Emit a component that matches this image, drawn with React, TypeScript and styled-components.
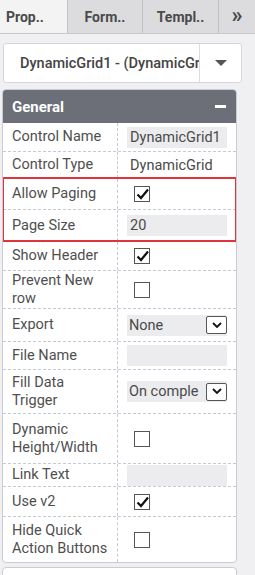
import React from 'react';
import styled, { createGlobalStyle } from 'styled-components';

const Global = createGlobalStyle`
  html, body {
    margin: 0;
    padding: 0;
    background: #f0f0f2;
  }
  body {
    font-family: Roboto, "Liberation Sans", sans-serif;
    color: #3c3c3c;
  }
`;

const Page = styled.div`
  width: 255px;
  height: 575px;
  overflow: hidden;
  background: #f0f0f2;
`;

const TabBar = styled.div`
  display: flex;
  height: 33px;
  border-bottom: 1px solid #c9c9cc;
  background: #e4e4e6;
`;

const Tab = styled.div<{ $w: number; $active?: boolean }>`
  width: ${p => p.$w}px;
  display: flex;
  align-items: center;
  justify-content: ${p => (p.$active ? 'flex-start' : 'center')};
  padding-left: ${p => (p.$active ? '6px' : '0')};
  font-size: 14px;
  font-weight: 700;
  color: #4a4a4a;
  background: ${p => (p.$active ? '#f3f3f4' : '#dcdcdf')};
  border-left: ${p => (p.$active ? 'none' : '1px solid #c2c2c6')};
  box-sizing: border-box;
`;

const More = styled.span`
  font-size: 22px;
  line-height: 1;
  margin-top: -3px;
`;

const Picker = styled.div`
  display: flex;
  height: 40px;
  margin: 9px 13px 6px 3px;
  border: 1px solid #d6d6da;
  border-radius: 3px;
  background: #fff;
  box-sizing: border-box;
`;

const PickerText = styled.div`
  flex: 1;
  display: flex;
  align-items: center;
  padding-left: 16px;
  font-size: 14.5px;
  font-weight: 500;
  color: #444;
  white-space: nowrap;
  overflow: hidden;
`;

const PickerArrow = styled.div`
  width: 41px;
  border-left: 1px solid #dcdce0;
  display: flex;
  align-items: center;
  justify-content: center;
  &::after {
    content: '';
    border-left: 6px solid transparent;
    border-right: 6px solid transparent;
    border-top: 6px solid #555;
  }
`;

const Panel = styled.div`
  margin: 0 18px 0 2px;
  background: #fff;
  border: 1px solid #c8ccd4;
  border-radius: 4px;
  overflow: hidden;
`;

const PanelHead = styled.div`
  height: 33px;
  background: #6c6e78;
  display: flex;
  align-items: center;
  justify-content: space-between;
  padding: 0 10px 0 9px;
  color: #fff;
  font-size: 15px;
  font-weight: 700;
`;

const Minus = styled.span`
  width: 11px;
  height: 3px;
  background: #fff;
`;

const Row = styled.div<{ $h: number; $first?: boolean }>`
  display: grid;
  grid-template-columns: 115px 1fr;
  height: ${p => p.$h}px;
  border-top: ${p => (p.$first ? 'none' : '1px dashed #c5cbd6')};
  box-sizing: border-box;
`;

const Label = styled.div`
  display: flex;
  align-items: center;
  padding: 0 8px 0 9px;
  border-right: 1px dashed #c5cbd6;
  font-size: 14.5px;
  line-height: 18px;
  color: #4f4f4f;
`;

const Value = styled.div`
  display: flex;
  align-items: center;
  padding: 0 9px;
  font-size: 14.5px;
  color: #4a4a4a;
`;

const Plain = styled.span`
  padding-left: 3px;
  white-space: nowrap;
`;

const Field = styled.div`
  flex: 1;
  height: 21px;
  display: flex;
  align-items: center;
  padding-left: 3px;
  background: #ececee;
  white-space: nowrap;
  overflow: hidden;
`;

const Check = styled.span`
  width: 16px;
  height: 16px;
  margin-left: 7px;
  border: 1px solid #555;
  box-sizing: border-box;
  display: flex;
  align-items: center;
  justify-content: center;
  background: #fff;
`;

const Select = styled.div`
  flex: 1;
  display: flex;
  align-items: center;
  justify-content: space-between;
  height: 21px;
  background: #ececee;
  padding-left: 2px;
  white-space: nowrap;
  overflow: hidden;
`;

const SelectBtn = styled.span`
  width: 21px;
  height: 18px;
  border: 1px solid #555;
  border-radius: 2px;
  box-sizing: border-box;
  background: #fff;
  display: flex;
  align-items: center;
  justify-content: center;
  flex-shrink: 0;
`;

const Highlight = styled.div`
  outline: 2px solid #e0353d;
  outline-offset: -1px;
  position: relative;
`;

const NextPanel = styled.div`
  margin: 4px 18px 0 2px;
  height: 20px;
  background: #fff;
  border: 1px solid #c8ccd4;
  border-radius: 4px;
`;

const Tick = () => (
  <svg width="13" height="12" viewBox="0 0 13 12">
    <path d="M1.5 6.5 L5 10 L12 1.5" fill="none" stroke="#111" strokeWidth="2.2" />
  </svg>
);

const Chevron = () => (
  <svg width="10" height="7" viewBox="0 0 10 7">
    <path d="M1 1 L5 5 L9 1" fill="none" stroke="#111" strokeWidth="1.8" />
  </svg>
);

export default function App() {
  return (
    <Page>
      <Global />
      <TabBar>
        <Tab $w={67} $active>Prop..</Tab>
        <Tab $w={75}>Form..</Tab>
        <Tab $w={76}>Templ..</Tab>
        <Tab $w={37}><More>»</More></Tab>
      </TabBar>

      <Picker>
        <PickerText>DynamicGrid1 - (DynamicGrid)</PickerText>
        <PickerArrow />
      </Picker>

      <Panel>
        <PanelHead>
          General
          <Minus />
        </PanelHead>
        <Row $h={28} $first>
          <Label>Control Name</Label>
          <Value><Field>DynamicGrid1</Field></Value>
        </Row>
        <Row $h={27}>
          <Label>Control Type</Label>
          <Value><Plain>DynamicGrid</Plain></Value>
        </Row>
        <Highlight>
          <Row $h={31}>
            <Label>Allow Paging</Label>
            <Value><Check><Tick /></Check></Value>
          </Row>
          <Row $h={32}>
            <Label>Page Size</Label>
            <Value><Field>20</Field></Value>
          </Row>
        </Highlight>
        <Row $h={29}>
          <Label>Show Header</Label>
          <Value><Check><Tick /></Check></Value>
        </Row>
        <Row $h={38}>
          <Label>Prevent New row</Label>
          <Value><Check /></Value>
        </Row>
        <Row $h={33}>
          <Label>Export</Label>
          <Value>
            <Select>None<SelectBtn><Chevron /></SelectBtn></Select>
          </Value>
        </Row>
        <Row $h={28}>
          <Label>File Name</Label>
          <Value><Field /></Value>
        </Row>
        <Row $h={44}>
          <Label>Fill Data Trigger</Label>
          <Value>
            <Select>On comple<SelectBtn><Chevron /></SelectBtn></Select>
          </Value>
        </Row>
        <Row $h={50}>
          <Label>Dynamic Height/Width</Label>
          <Value><Check /></Value>
        </Row>
        <Row $h={23}>
          <Label>Link Text</Label>
          <Value><Field /></Value>
        </Row>
        <Row $h={30}>
          <Label>Use v2</Label>
          <Value><Check><Tick /></Check></Value>
        </Row>
        <Row $h={46}>
          <Label>Hide Quick Action Buttons</Label>
          <Value><Check /></Value>
        </Row>
      </Panel>
      <NextPanel />
    </Page>
  );
}
